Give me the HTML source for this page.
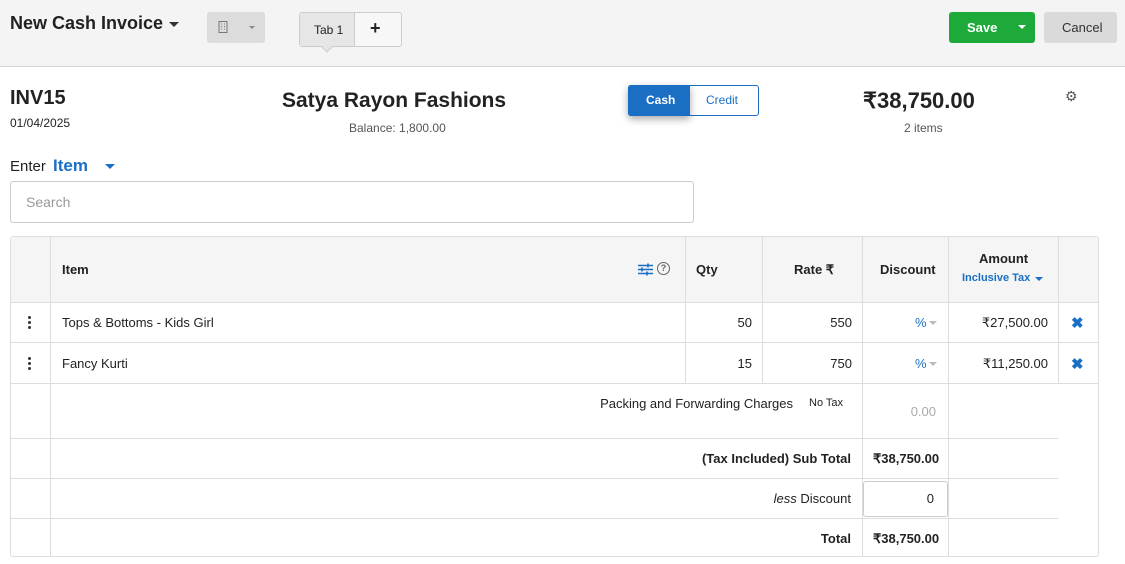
<!DOCTYPE html>
<html><head><meta charset="utf-8"><style>
*{margin:0;padding:0;box-sizing:border-box}
body{width:1125px;height:564px;position:relative;background:#fff;font-family:"Liberation Sans",sans-serif;color:#222;overflow:hidden}
.a{position:absolute}
.hl{position:absolute;height:1px;background:#ddd}
.vl{position:absolute;width:1px;background:#ddd}
.t{position:absolute;font-size:13px;white-space:nowrap}
.r{text-align:right}
.b{font-weight:bold}
.blue{color:#1a6fc4}
.dots{position:absolute;width:3px}
.dots i{display:block;width:3px;height:3px;background:#333;border-radius:50%;margin-bottom:2px}
</style></head><body>
<div class="a" style="left:0;top:0;width:1125px;height:67px;background:#f4f4f4;border-bottom:1px solid #d6d6d6"></div>
<div class="t b" style="left:10px;top:13px;font-size:18px;color:#222">New Cash Invoice</div>
<div class="a" style="left:169px;top:22px;border-left:5px solid transparent;border-right:5px solid transparent;border-top:5px solid #333"></div>
<div class="a" style="left:207px;top:12px;width:58px;height:31px;background:#dcdcdc;border-radius:3px"></div>
<svg class="a" style="left:218px;top:21px" width="10" height="12"><rect x="1" y="0.5" width="8" height="11" fill="none" stroke="#777"/><path d="M3 3h1M6 3h1M3 5.5h1M6 5.5h1M3 8h1M6 8h1" stroke="#777"/></svg>
<div class="a" style="left:249px;top:26px;border-left:3px solid transparent;border-right:3px solid transparent;border-top:3px solid #888"></div>
<div class="a" style="left:299px;top:12px;width:103px;height:35px;border:1px solid #ccc;border-radius:3px;background:#f7f7f7"></div>
<div class="a" style="left:300px;top:13px;width:55px;height:33px;background:#e6e6e6;border-right:1px solid #ccc"></div>
<div class="t" style="left:314px;top:23px;font-size:12px">Tab 1</div>
<div class="t b" style="left:370px;top:18px;font-size:18px">+</div>
<div class="a" style="left:323px;top:43px;width:8px;height:8px;background:#e6e6e6;border-right:1px solid #ccc;border-bottom:1px solid #ccc;transform:rotate(45deg)"></div>
<div class="a" style="left:949px;top:12px;width:86px;height:31px;background:#1daa3a;border-radius:3px"></div>
<div class="t b" style="left:967px;top:20px;color:#fff">Save</div>
<div class="a" style="left:1018px;top:25px;border-left:4px solid transparent;border-right:4px solid transparent;border-top:4px solid #fff"></div>
<div class="a" style="left:1044px;top:12px;width:73px;height:31px;background:#dadada;border-radius:3px"></div>
<div class="t" style="left:1062px;top:20px;color:#333">Cancel</div>

<div class="t b" style="left:10px;top:87px;font-size:20px">INV15</div>
<div class="t" style="left:10px;top:116px;font-size:12px">01/04/2025</div>
<div class="t b" style="left:282px;top:89px;font-size:21px">Satya Rayon Fashions</div>
<div class="t" style="left:349px;top:121px;font-size:12px;color:#555">Balance: 1,800.00</div>
<div class="a" style="left:628px;top:85px;width:131px;height:31px;border:1px solid #1a6fc4;border-radius:3px"></div>
<div class="a" style="left:628px;top:85px;width:62px;height:31px;background:#1a6fc4;border-radius:3px 0 0 3px;box-shadow:0 3px 8px rgba(0,0,0,.35)"></div>
<div class="t b" style="left:646px;top:93px;color:#fff;font-size:12px">Cash</div>
<div class="t blue" style="left:706px;top:93px;font-size:12px">Credit</div>
<div class="t b" style="left:863px;top:88px;font-size:22px">₹38,750.00</div>
<div class="t" style="left:904px;top:121px;font-size:12px;color:#555">2 items</div>
<div class="t" style="left:1065px;top:88px;font-size:14px;color:#555">⚙</div>

<div class="t" style="left:10px;top:158px;font-size:15px">Enter</div>
<div class="t b blue" style="left:53px;top:156px;font-size:17px">Item</div>
<div class="a" style="left:105px;top:164px;border-left:5px solid transparent;border-right:5px solid transparent;border-top:5px solid #1a6fc4"></div>
<div class="a" style="left:10px;top:181px;width:684px;height:42px;border:1px solid #ccc;border-radius:3px"></div>
<div class="t" style="left:26px;top:194px;font-size:14px;color:#999">Search</div>

<div class="a" style="left:10px;top:236px;width:1089px;height:321px;border:1px solid #ddd;border-radius:3px"></div>
<div class="a" style="left:11px;top:237px;width:1087px;height:65px;background:#f5f5f5"></div>
<div class="hl" style="left:10px;top:302px;width:1089px"></div>
<div class="hl" style="left:10px;top:342px;width:1089px"></div>
<div class="hl" style="left:10px;top:383px;width:1089px"></div>
<div class="hl" style="left:10px;top:438px;width:1048px"></div>
<div class="hl" style="left:10px;top:478px;width:1048px"></div>
<div class="hl" style="left:10px;top:518px;width:1048px"></div>
<div class="vl" style="left:50px;top:236px;height:320px"></div>
<div class="vl" style="left:685px;top:236px;height:147px"></div>
<div class="vl" style="left:762px;top:236px;height:147px"></div>
<div class="vl" style="left:862px;top:236px;height:320px"></div>
<div class="vl" style="left:948px;top:236px;height:320px"></div>
<div class="vl" style="left:1058px;top:236px;height:147px"></div>

<div class="t b" style="left:62px;top:262px">Item</div>
<svg class="a" style="left:638px;top:263px" width="15" height="13"><path d="M0 2.5h15M0 6.5h15M0 10.5h15" stroke="#1a6fc4" stroke-width="1.6"/><path d="M10 0.5v4M4 4.5v4M9 8.5v4" stroke="#1a6fc4" stroke-width="1.6"/></svg>
<div class="a" style="left:657px;top:262px;width:13px;height:13px;border:1.3px solid #666;border-radius:50%;font-size:9px;text-align:center;line-height:11px;color:#666;font-weight:bold">?</div>
<div class="t b" style="left:696px;top:262px">Qty</div>
<div class="t b" style="left:794px;top:262px">Rate ₹</div>
<div class="t b" style="left:880px;top:262px">Discount</div>
<div class="t b" style="left:979px;top:251px">Amount</div>
<div class="t blue b" style="left:962px;top:272px;font-size:11px">Inclusive Tax</div>
<div class="a" style="left:1035px;top:277px;border-left:4px solid transparent;border-right:4px solid transparent;border-top:4px solid #1a6fc4"></div>

<div class="dots" style="left:28px;top:316px"><i></i><i></i><i></i></div>
<div class="t" style="left:62px;top:315px">Tops &amp; Bottoms - Kids Girl</div>
<div class="t r" style="left:700px;width:52px;top:315px">50</div>
<div class="t r" style="left:770px;width:82px;top:315px">550</div>
<div class="t blue" style="left:915px;top:315px">%</div>
<div class="a" style="left:929px;top:321px;border-left:4px solid transparent;border-right:4px solid transparent;border-top:4px solid #bbb"></div>
<div class="t r" style="left:950px;width:98px;top:315px">₹27,500.00</div>
<div class="t b blue" style="left:1071px;top:314px;font-size:15px">✖</div>

<div class="dots" style="left:28px;top:357px"><i></i><i></i><i></i></div>
<div class="t" style="left:62px;top:356px">Fancy Kurti</div>
<div class="t r" style="left:700px;width:52px;top:356px">15</div>
<div class="t r" style="left:770px;width:82px;top:356px">750</div>
<div class="t blue" style="left:915px;top:356px">%</div>
<div class="a" style="left:929px;top:362px;border-left:4px solid transparent;border-right:4px solid transparent;border-top:4px solid #bbb"></div>
<div class="t r" style="left:950px;width:98px;top:356px">₹11,250.00</div>
<div class="t b blue" style="left:1071px;top:355px;font-size:15px">✖</div>

<div class="t r" style="left:500px;width:293px;top:396px">Packing and Forwarding Charges</div>
<div class="t" style="left:809px;top:397px;font-size:11px">No Tax</div>
<div class="t r" style="left:870px;width:66px;top:404px;color:#aaa">0.00</div>
<div class="t b r" style="left:500px;width:351px;top:451px">(Tax Included) Sub Total</div>
<div class="t b" style="left:873px;top:451px">₹38,750.00</div>
<div class="t r" style="left:500px;width:351px;top:491px"><i>less</i> Discount</div>
<div class="a" style="left:863px;top:481px;width:85px;height:36px;border:1px solid #ccc;border-radius:3px"></div>
<div class="t r" style="left:870px;width:64px;top:491px">0</div>
<div class="t b r" style="left:500px;width:351px;top:531px">Total</div>
<div class="t b" style="left:873px;top:531px">₹38,750.00</div>
</body></html>
